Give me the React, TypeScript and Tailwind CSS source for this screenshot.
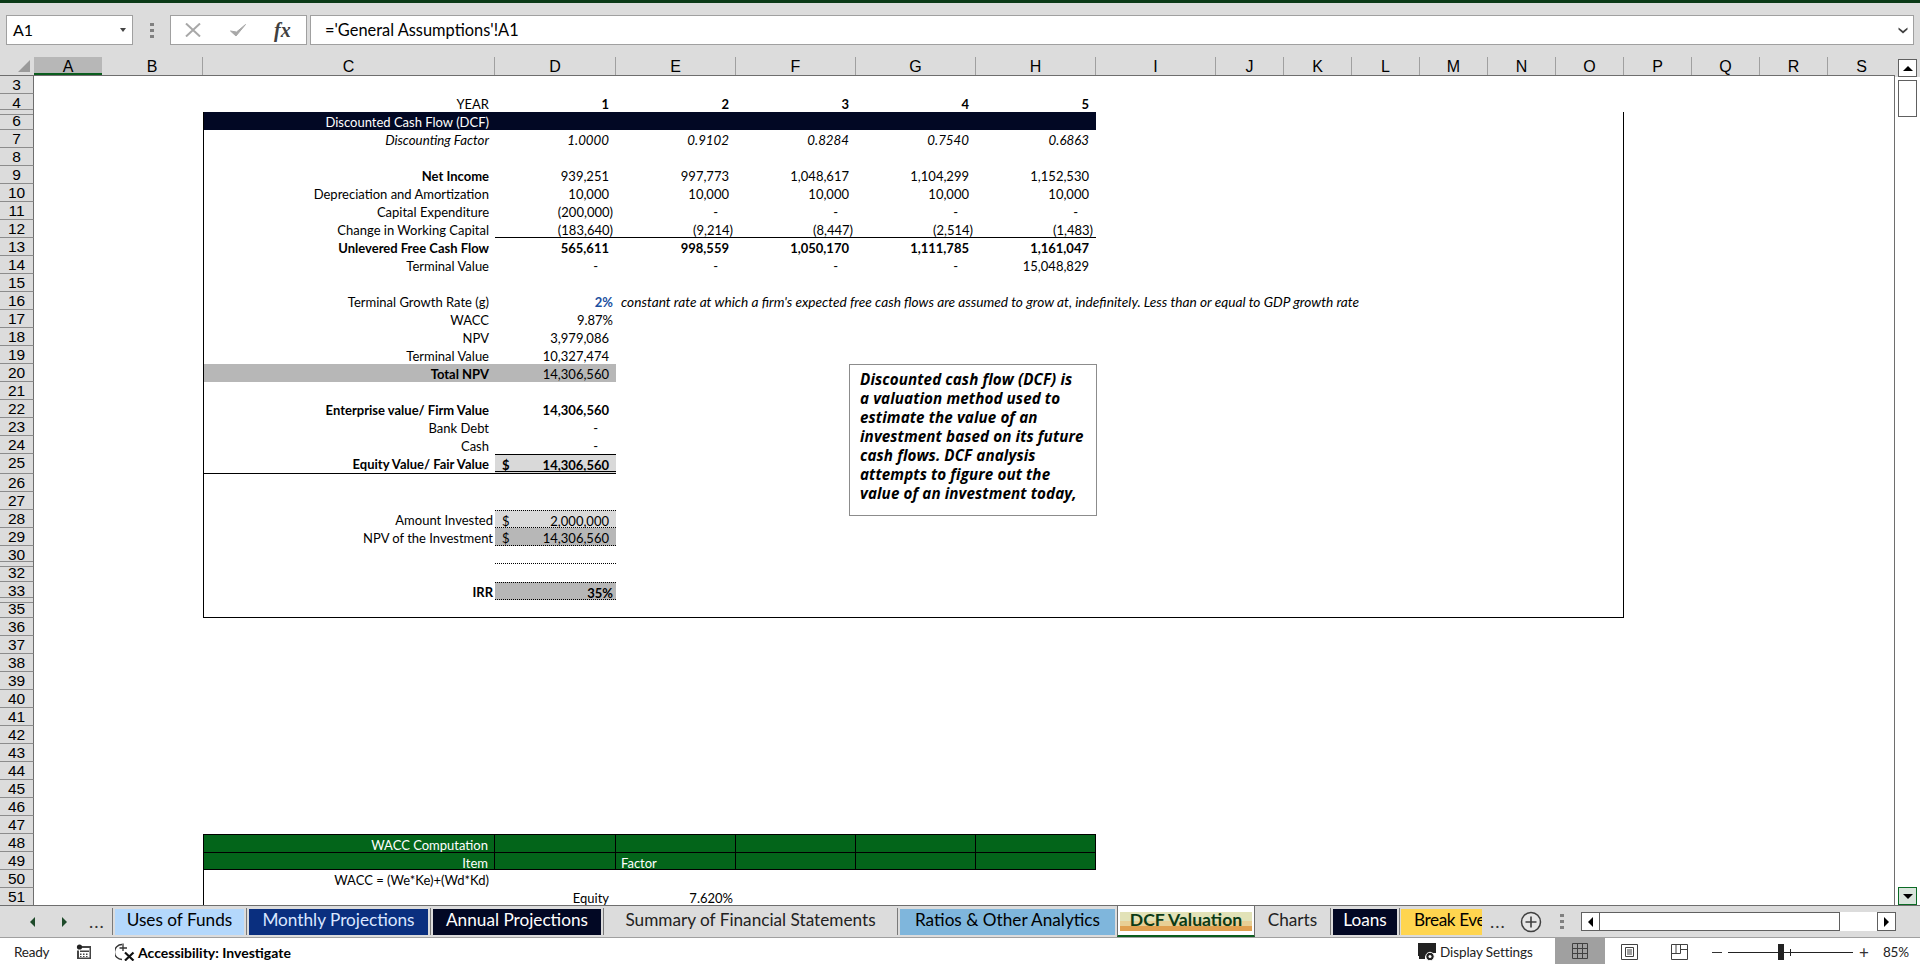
import type { ReactNode } from 'react'

type Cell = { t?: ReactNode; c?: string }
type RowSpec = {
  n: number
  tall?: boolean
  gapAbove?: boolean
  gapBelow?: boolean
  cells?: Record<string, Cell>
}

const columns = ['A', 'B', 'C', 'D', 'E', 'F', 'G', 'H', 'I', 'J', 'K', 'L', 'M', 'N', 'O', 'P', 'Q', 'R', 'S']
const gridCols =
  'grid grid-rows-[100%] grid-cols-[34px_68px_101px_292px_121px_120px_120px_120px_120px_120px_68px_68px_68px_68px_68px_68px_68px_68px_68px_67px]'

const label = 'text-right pr-[6px]'
const num = 'text-right pr-[7px]'
const paren = 'text-right pr-[3px]'
const dash = 'text-right pr-[18px]'
const gray = 'bg-[#b7b7b7]'
const navy = 'bg-[#020824] text-white'
const green = 'bg-[#03651a] text-white border-t border-r border-black'
const slanted = 'italic text-[13.3px]'

const fiveCols = ['D', 'E', 'F', 'G', 'H']

function five(values: string[], c: string) {
  const cells: Record<string, Cell> = {}
  values.forEach((t, i) => {
    cells[fiveCols[i]] = { t, c: t === '-' ? dash : t.startsWith('(') ? `${paren} ${c}` : `${num} ${c}` }
  })
  return cells
}

function money(t: string) {
  return (
    <span className="flex justify-between pl-[7px] pr-[7px]">
      <span>$</span>
      <span>{t}</span>
    </span>
  )
}

const specs: RowSpec[] = [
  { n: 3 },
  { n: 4, gapBelow: true, cells: { C: { t: 'YEAR', c: label }, ...five(['1', '2', '3', '4', '5'], 'font-bold') } },
  {
    n: 6,
    gapAbove: true,
    cells: {
      C: { t: 'Discounted Cash Flow (DCF)', c: `${label} ${navy}` },
      D: { c: navy },
      E: { c: navy },
      F: { c: navy },
      G: { c: navy },
      H: { c: navy },
    },
  },
  {
    n: 7,
    cells: {
      C: { t: 'Discounting Factor', c: `${label} ${slanted}` },
      ...five(['1.0000', '0.9102', '0.8284', '0.7540', '0.6863'], slanted),
    },
  },
  { n: 8 },
  {
    n: 9,
    cells: {
      C: { t: 'Net Income', c: `${label} font-bold` },
      ...five(['939,251', '997,773', '1,048,617', '1,104,299', '1,152,530'], ''),
    },
  },
  {
    n: 10,
    cells: {
      C: { t: 'Depreciation and Amortization', c: label },
      ...five(['10,000', '10,000', '10,000', '10,000', '10,000'], ''),
    },
  },
  { n: 11, cells: { C: { t: 'Capital Expenditure', c: label }, ...five(['(200,000)', '-', '-', '-', '-'], '') } },
  {
    n: 12,
    cells: {
      C: { t: 'Change in Working Capital', c: label },
      ...five(['(183,640)', '(9,214)', '(8,447)', '(2,514)', '(1,483)'], 'border-b border-black'),
    },
  },
  {
    n: 13,
    cells: {
      C: { t: 'Unlevered Free Cash Flow', c: `${label} font-bold` },
      ...five(['565,611', '998,559', '1,050,170', '1,111,785', '1,161,047'], 'font-bold'),
    },
  },
  { n: 14, cells: { C: { t: 'Terminal Value', c: label }, ...five(['-', '-', '-', '-', '15,048,829'], '') } },
  { n: 15 },
  {
    n: 16,
    cells: {
      C: { t: 'Terminal Growth Rate (g)', c: label },
      D: { t: '2%', c: `${paren} font-bold text-[#1a4fa0]` },
      E: {
        t: "constant rate at which a firm's expected free cash flows are assumed to grow at, indefinitely. Less than or equal to GDP growth rate",
        c: 'pl-[5px] italic text-[13.7px]',
      },
    },
  },
  { n: 17, cells: { C: { t: 'WACC', c: label }, D: { t: '9.87%', c: paren } } },
  { n: 18, cells: { C: { t: 'NPV', c: label }, D: { t: '3,979,086', c: num } } },
  { n: 19, cells: { C: { t: 'Terminal Value', c: label }, D: { t: '10,327,474', c: num } } },
  {
    n: 20,
    cells: {
      C: { t: 'Total NPV', c: `${label} font-bold ${gray}` },
      D: { t: '14,306,560', c: `${num} ${gray}` },
    },
  },
  { n: 21 },
  {
    n: 22,
    cells: {
      C: { t: 'Enterprise value/ Firm Value', c: `${label} font-bold` },
      D: { t: '14,306,560', c: `${num} font-bold` },
    },
  },
  { n: 23, cells: { C: { t: 'Bank Debt', c: label }, D: { t: '-', c: dash } } },
  { n: 24, cells: { C: { t: 'Cash', c: label }, D: { t: '-', c: dash } } },
  {
    n: 25,
    tall: true,
    cells: {
      C: { t: 'Equity Value/ Fair Value', c: `${label} font-bold border-b border-black` },
      D: {
        t: money('14,306,560'),
        c: 'font-bold bg-[#d9d9d9] border-t border-black border-b-[3px] border-double',
      },
    },
  },
  { n: 26 },
  { n: 27 },
  {
    n: 28,
    cells: {
      C: { t: 'Amount Invested', c: 'text-right pr-[2px]' },
      D: { t: money('2,000,000'), c: 'bg-[#d9d9d9] border-t border-b border-dotted border-black' },
    },
  },
  {
    n: 29,
    cells: {
      C: { t: 'NPV of the Investment', c: 'text-right pr-[2px]' },
      D: { t: money('14,306,560'), c: `${gray} border-b border-dotted border-black` },
    },
  },
  { n: 30, gapBelow: true, cells: { D: { c: 'border-b border-dotted border-black' } } },
  { n: 32, gapAbove: true },
  {
    n: 33,
    gapBelow: true,
    cells: {
      C: { t: 'IRR', c: 'text-right pr-[2px] font-bold' },
      D: { t: '35%', c: `${paren} font-bold ${gray} border-t border-b border-dotted border-black` },
    },
  },
  { n: 35, gapAbove: true },
]

const frameRows = specs.filter(s => s.n >= 6 && s.n <= 35).map(s => s.n)
for (let n = 36; n <= 47; n++) specs.push({ n })
specs.push({
  n: 48,
  cells: {
    C: { t: 'WACC Computation', c: `${label} ${green}` },
    D: { c: green },
    E: { c: green },
    F: { c: green },
    G: { c: green },
    H: { c: green },
  },
})
specs.push({
  n: 49,
  cells: {
    C: { t: 'Item', c: `${label} ${green} border-b` },
    D: { c: `${green} border-b` },
    E: { t: 'Factor', c: `pl-[5px] ${green} border-b` },
    F: { c: `${green} border-b` },
    G: { c: `${green} border-b` },
    H: { c: `${green} border-b` },
  },
})
specs.push({ n: 50, cells: { C: { t: 'WACC = (We*Ke)+(Wd*Kd)', c: label } } })
specs.push({ n: 51, cells: { D: { t: 'Equity', c: num }, E: { t: '7.620%', c: paren } } })

function Row({ spec }: { spec: RowSpec }) {
  const framed = frameRows.includes(spec.n)
  const isLast = spec.n === 35
  const leftLine = framed || spec.n >= 48
  return (
    <div className={`${gridCols} ${spec.tall ? 'h-[20px]' : 'h-[18px]'} shrink-0`}>
      <div
        className={`relative border-r border-[#6e6e6e] bg-[#dcdcdc] text-center font-['Liberation_Sans',sans-serif] text-[15.5px] leading-[18px] text-black ${
          spec.gapBelow ? '' : 'border-b border-b-[#8c8c8c]'
        }`}
      >
        {spec.gapAbove && <span className="absolute inset-x-0 top-[2px] h-px bg-[#8c8c8c]" />}
        {spec.gapBelow && <span className="absolute inset-x-0 bottom-[2px] h-px bg-[#8c8c8c]" />}
        {spec.n}
      </div>
      {columns.map((col, i) => {
        const cell = spec.cells?.[col]
        const isC = col === 'C'
        const edge = `${isC && leftLine ? 'border-l border-l-black' : ''} ${col === 'O' && framed ? 'border-r border-r-black' : ''} ${
          isLast && i >= 2 && i <= 14 ? 'border-b border-b-black' : ''
        }`
        return (
          <div key={col} className={`whitespace-nowrap leading-[20px] ${edge} ${cell?.c ?? ''}`}>
            {cell?.t}
          </div>
        )
      })}
    </div>
  )
}

function FormulaBar() {
  return (
    <div className="flex h-[54px] shrink-0 items-start bg-[#dcdcdc] pt-[12px] pl-[6px] pr-[6px]">
      <div className="flex h-[30px] w-[127px] items-center justify-between border border-[#a0a0a0] bg-white pl-[6px] pr-[6px] text-[16px]">
        <span>A1</span>
        <span className="h-0 w-0 border-x-[3px] border-t-[4px] border-x-transparent border-t-[#444]" />
      </div>
      <div className="flex h-[30px] w-[37px] flex-col items-center justify-center gap-[3px]">
        <span className="h-[3px] w-[4px] bg-[#808080]" />
        <span className="h-[3px] w-[4px] bg-[#808080]" />
        <span className="h-[3px] w-[4px] bg-[#808080]" />
      </div>
      <div className="flex h-[30px] w-[137px] items-center border border-[#a0a0a0] bg-white pl-[14px]">
        <svg width="16" height="14" viewBox="0 0 16 14" className="text-[#a8a8a8]">
          <path d="M1 0.5 L15 13.5 M15 0.5 L1 13.5" stroke="currentColor" strokeWidth="2" fill="none" />
        </svg>
        <svg width="16" height="13" viewBox="0 0 16 13" className="ml-[29px] text-[#a8a8a8]">
          <path d="M0.5 7 L6 12 L15.5 0.5 L6.5 8 Z" fill="currentColor" stroke="currentColor" />
        </svg>
        <span className="ml-[28px] font-['Liberation_Serif',serif] text-[20px] leading-none font-bold italic text-[#404040]">
          fx
        </span>
      </div>
      <div className="ml-[3px] flex h-[30px] flex-1 items-center justify-between border border-[#a0a0a0] bg-white pl-[14px] pr-[5px] text-[16.4px]">
        <span>='General Assumptions'!A1</span>
        <svg width="10" height="7" viewBox="0 0 10 7" className="text-[#404040]">
          <path d="M0.5 0.5 L5 4 L9.5 0.5 L9.5 2.5 L5 6.5 L0.5 2.5 Z" fill="currentColor" />
        </svg>
      </div>
    </div>
  )
}

function ColumnHeader() {
  return (
    <div className={`${gridCols} h-[19px] shrink-0 border-b border-[#6e6e6e] bg-[#dcdcdc] font-['Liberation_Sans',sans-serif] text-[16px] leading-[19px]`}>
      <div className="relative">
        <span className="absolute right-[4px] bottom-[3px] h-0 w-0 border-b-[12px] border-l-[12px] border-b-[#9a9a9a] border-l-transparent" />
      </div>
      {columns.map((col, i) => (
        <div
          key={col}
          className={`text-center ${
            i === 0 ? 'border-b-2 border-b-[#0b5d1e] bg-[#b7b7b7]' : i === 18 ? '' : 'border-r border-r-[#a0a0a0]'
          }`}
        >
          {col}
        </div>
      ))}
    </div>
  )
}

function VScroll() {
  return (
    <div className="flex w-[25px] shrink-0 flex-col items-center bg-white">
      <div className="flex h-[20px] w-full shrink-0 items-end justify-center bg-[#dcdcdc]">
        <div className="flex h-[18px] w-[19px] shrink-0 items-center justify-center border border-[#606060] bg-white">
          <span className="h-0 w-0 border-x-[5px] border-b-[5px] border-x-transparent border-b-black" />
        </div>
      </div>
      <div className="mt-[3px] h-[37px] w-[19px] shrink-0 border border-[#606060] bg-white" />
      <div className="flex-1" />
      <div className="flex h-[18px] w-[19px] shrink-0 items-center justify-center border border-[#0b6b25] bg-[#d9e4dc]">
        <span className="h-0 w-0 border-x-[5px] border-t-[5px] border-x-transparent border-t-black" />
      </div>
    </div>
  )
}

function Sep() {
  return <span className="h-[27px] w-px shrink-0 bg-[#7a7a7a]" />
}

function Tab({ name, c, w }: { name: string; c: string; w: string }) {
  return (
    <div className={`flex h-[26px] shrink-0 items-center justify-center whitespace-nowrap pb-[3px] text-[17.2px] leading-none ${c} ${w}`}>
      {name}
    </div>
  )
}

function TabStrip() {
  return (
    <div className="flex h-[33px] shrink-0 items-center border-t border-b border-t-[#6e6e6e] border-b-[#a0a0a0] bg-[#dcdcdc]">
      <div className="flex h-full w-[112px] shrink-0 items-center pl-[30px]">
        <span className="h-0 w-0 border-y-[5px] border-r-[5px] border-y-transparent border-r-[#1e4a2a]" />
        <span className="ml-[27px] h-0 w-0 border-y-[5px] border-l-[5px] border-y-transparent border-l-[#1e4a2a]" />
        <span className="ml-[22px] text-[18px] tracking-[1px] text-[#333]">...</span>
      </div>
      <Sep />
      <div className="ml-[2px]" />
      <Tab name="Uses of Funds" c="bg-[#b4d8fc] text-black" w="w-[129px]" />
      <div className="ml-[2px]" />
      <Sep />
      <div className="ml-[2px]" />
      <Tab name="Monthly Projections" c="bg-[#0a2f7f] text-[#dbe7ff]" w="w-[179px]" />
      <div className="ml-[2px]" />
      <Sep />
      <div className="ml-[2px]" />
      <Tab name="Annual Projections" c="bg-[#020824] text-white" w="w-[168px]" />
      <div className="ml-[2px]" />
      <Sep />
      <Tab name="Summary of Financial Statements" c="text-[#222]" w="w-[293px]" />
      <Sep />
      <div className="ml-[2px]" />
      <Tab name="Ratios & Other Analytics" c="bg-[#7fb6dc] text-black" w="w-[215px]" />
      <div className="ml-[2px]" />
      <div className="flex h-full w-[138px] shrink-0 flex-col border-x border-b-2 border-x-[#6e6e6e] border-b-[#0b5d1e] bg-white px-[2px] pt-[6px]">
        <div className="flex h-[19px] items-center justify-center bg-[linear-gradient(#e2e2b8_0%,#e2e2b8_45%,#e8cf95_45%,#e8cf95_72%,#e0a050_72%,#e0a050_100%)] pb-[3px] text-[17.6px] leading-none font-bold text-[#0b3b17]">
          DCF Valuation
        </div>
      </div>
      <Tab name="Charts" c="text-[#222]" w="w-[75px]" />
      <Sep />
      <div className="ml-[2px]" />
      <Tab name="Loans" c="bg-[#020824] text-white" w="w-[64px]" />
      <div className="ml-[2px]" />
      <Sep />
      <div className="ml-[1px] flex h-[26px] w-[81px] shrink-0 items-center overflow-hidden whitespace-nowrap bg-[#ffd54f] pb-[3px] pl-[13px] text-[17.2px] leading-none tracking-[-0.4px] text-black">
        Break Eve
      </div>
      <span className="ml-[8px] text-[18px] tracking-[1px] text-[#333]">...</span>
      <svg width="22" height="22" viewBox="0 0 22 22" className="ml-[14px] shrink-0 text-[#404040]">
        <circle cx="11" cy="11" r="9.5" stroke="currentColor" strokeWidth="1.5" fill="#e6e6e6" />
        <path d="M11 5.5 V16.5 M5.5 11 H16.5" stroke="currentColor" strokeWidth="1.6" />
      </svg>
      <div className="ml-[18px] flex w-[4px] shrink-0 flex-col gap-[3px]">
        <span className="h-[3px] w-[4px] bg-[#808080]" />
        <span className="h-[3px] w-[4px] bg-[#808080]" />
        <span className="h-[3px] w-[4px] bg-[#808080]" />
      </div>
      <div className="ml-[17px] flex h-[19px] shrink-0">
        <div className="flex w-[19px] items-center justify-center border border-[#606060] bg-white">
          <span className="h-0 w-0 border-y-[5px] border-r-[5px] border-y-transparent border-r-black" />
        </div>
        <div className="w-[240px] border-y border-r border-[#606060] bg-white" />
        <div className="w-[37px] bg-white" />
        <div className="flex w-[19px] items-center justify-center border border-[#606060] bg-white">
          <span className="h-0 w-0 border-y-[5px] border-l-[5px] border-y-transparent border-l-black" />
        </div>
      </div>
    </div>
  )
}

function StatusBar() {
  return (
    <div className="flex h-[28px] shrink-0 items-center bg-white text-[13.5px] text-[#222]">
      <span className="ml-[14px] w-[62px] tracking-[-0.2px]">Ready</span>
      <svg width="16" height="16" viewBox="0 0 16 16" className="shrink-0">
        <circle cx="3.5" cy="3" r="2.6" fill="#222" />
        <path d="M6 2 H15 V15 H1 V6.5 H3 V13.5 H13.5 V4 H6 Z" fill="#444" />
        <path d="M4 6.5 H13 V8 H4 Z M4 9.5 H5.5 V11 H4 Z M7 9.5 H8.5 V11 H7 Z M10 9.5 H11.5 V11 H10 Z M4 12 H5.5 V13 H4 Z M7 12 H8.5 V13 H7 Z M10 12 H11.5 V13 H10 Z" fill="#444" />
      </svg>
      <svg width="20" height="18" viewBox="0 0 20 18" className="ml-[23px] shrink-0">
        <path d="M7 1.5 A7.5 7.5 0 0 0 7 16.5" stroke="#333" strokeWidth="1.3" fill="none" />
        <path d="M8 0.5 V8 M4.5 5 H12" stroke="#333" strokeWidth="1.3" fill="none" />
        <path d="M10 9.5 L18.5 17.5 M18.5 9.5 L10 17.5" stroke="#111" strokeWidth="2.2" fill="none" />
      </svg>
      <span className="ml-[3px] w-[1279px] text-[14px] font-bold text-black">Accessibility: Investigate</span>
      <svg width="20" height="20" viewBox="0 0 20 20" className="shrink-0">
        <path d="M1 1 H19 V11 H14 V14 H1 Z M2 14 H8 V17 H2 Z" fill="#222" />
        <circle cx="13" cy="14.5" r="4.2" fill="#222" stroke="#fff" strokeWidth="1" />
        <circle cx="13" cy="14.5" r="1.5" fill="#fff" />
      </svg>
      <span className="ml-[3px] w-[115px] tracking-[-0.1px]">Display Settings</span>
      <div className="flex h-[26px] w-[50px] shrink-0 items-center justify-center self-start bg-[#a0a0a0]">
        <svg width="16" height="16" viewBox="0 0 16 16" stroke="#404040" fill="none">
          <path d="M0.5 0.5 H15.5 V15.5 H0.5 Z M0.5 5.5 H15.5 M0.5 10.5 H15.5 M5.5 0.5 V15.5 M10.5 0.5 V15.5" />
        </svg>
      </div>
      <svg width="17" height="16" viewBox="0 0 17 16" stroke="#404040" fill="none" className="ml-[16px] shrink-0">
        <path d="M0.5 0.5 H16.5 V15.5 H0.5 Z M4.5 3.5 H12.5 V12.5 H4.5 Z M6 6 H11 M6 8 H11 M6 10 H11" />
      </svg>
      <svg width="17" height="16" viewBox="0 0 17 16" stroke="#404040" fill="none" className="ml-[33px] shrink-0">
        <path d="M0.5 0.5 H16.5 V15.5 H0.5 Z M0.5 9.5 H9.5 V0.5 M9.5 5.5 H16.5 M5 0.5 V9.5" />
      </svg>
      <span className="ml-[24px] h-px w-[10px] shrink-0 bg-[#333]" />
      <div className="relative ml-[6px] h-px w-[125px] shrink-0 bg-[#222]">
        <span className="absolute top-[-8px] left-[50px] h-[16px] w-[6px] bg-[#222]" />
        <span className="absolute top-[-3px] left-[62px] h-[7px] w-px bg-[#222]" />
      </div>
      <span className="ml-[6px] text-[17px] leading-none text-[#333]">+</span>
      <span className="ml-[14px] tracking-[-0.1px]">85%</span>
    </div>
  )
}

export default function App() {
  return (
    <div className="flex h-[966px] w-[1920px] flex-col overflow-hidden bg-white font-['Lato','Liberation_Sans',sans-serif] text-[13px] text-black">
      <div className="h-[3px] shrink-0 bg-[#0b3a17]" />
      <FormulaBar />
      <div className="flex min-h-0 flex-1">
        <div className="relative flex w-[1895px] shrink-0 flex-col overflow-hidden">
          <ColumnHeader />
          <div className="min-h-0 flex-1 overflow-hidden border-r border-[#6e6e6e]">
            {specs.map(s => (
              <Row key={s.n} spec={s} />
            ))}
          </div>
          <div className="absolute top-[307px] left-[849px] h-[152px] w-[248px] border border-[#8c8c8c] bg-white pt-[5px] pl-[10px] font-['Open_Sans',sans-serif] text-[15.2px] leading-[19px] font-bold italic tracking-[0.1px] whitespace-nowrap">
            <div>Discounted cash flow (DCF) is</div>
            <div>a valuation method used to</div>
            <div>estimate the value of an</div>
            <div>investment based on its future</div>
            <div>cash flows. DCF analysis</div>
            <div>attempts to figure out the</div>
            <div>value of an investment today,</div>
          </div>
        </div>
        <VScroll />
      </div>
      <TabStrip />
      <StatusBar />
    </div>
  )
}
